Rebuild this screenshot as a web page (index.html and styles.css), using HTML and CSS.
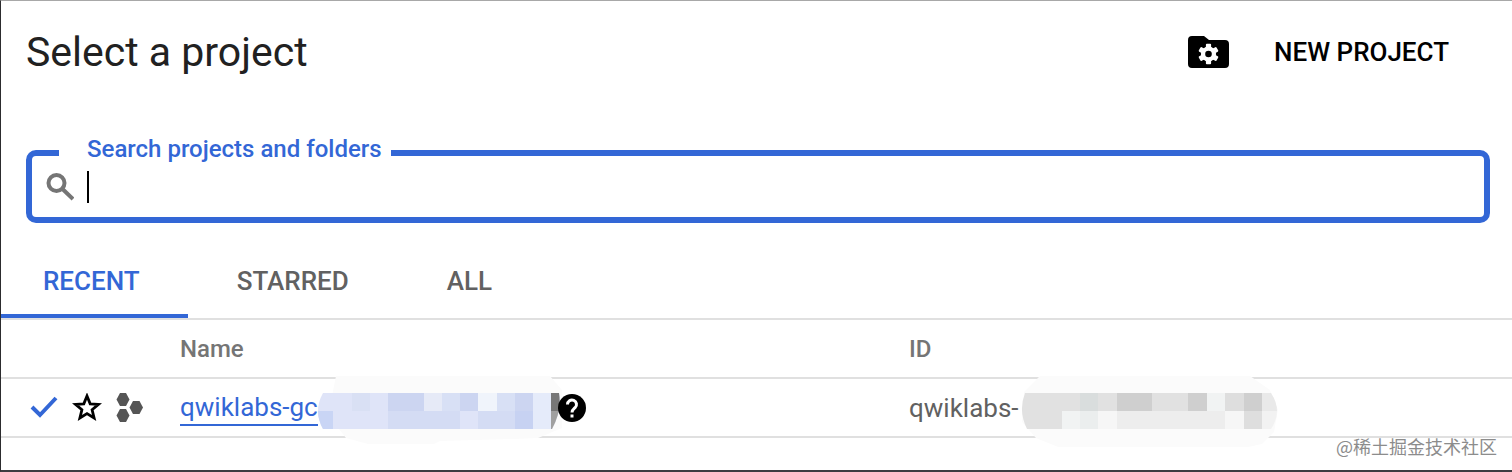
FILE: index.html
```html
<!DOCTYPE html>
<html lang="en">
<head>
    <meta charset="UTF-8">
    <meta name="viewport" content="width=device-width, initial-scale=1.0">
    <title>Select a project</title>
    <link rel="stylesheet" href="styles.css">
</head>
<body>
    <div class="dialog">
        <header class="dialog-header">
            <h1>Select a project</h1>
            <div class="header-actions">
                <button class="icon-button" aria-label="Manage resources">
                    <svg width="42" height="34" viewBox="0 0 42 34">
                        <path d="M4 1h12l5 4h16a4 4 0 0 1 4 4v20a4 4 0 0 1-4 4H4a4 4 0 0 1-4-4V5a4 4 0 0 1 4-4z"/>
                        <g fill="#fff" transform="translate(20.500 19)">
                            <circle r="7.600"/>
                            <rect x="-2.600" y="-10.200" width="5.200" height="20.400" rx="1"/>
                            <rect x="-2.600" y="-10.200" width="5.200" height="20.400" rx="1" transform="rotate(60)"/>
                            <rect x="-2.600" y="-10.200" width="5.200" height="20.400" rx="1" transform="rotate(120)"/>
                        </g>
                        <circle cx="20.500" cy="19" r="3.300"/>
                    </svg>
                </button>
                <button class="text-button">NEW PROJECT</button>
            </div>
        </header>

        <fieldset class="search">
            <legend><label for="search">Search projects and folders</label></legend>
            <div class="search-row">
                <svg width="28" height="28" viewBox="0 0 28 28" fill="none" stroke="#757575" stroke-width="4">
                    <circle cx="10.500" cy="10" r="8"/>
                    <path d="M16.500 16L27 26"/>
                </svg>
                <span class="caret"></span>
                <input type="text" id="search">
            </div>
        </fieldset>

        <nav class="tabs">
            <button class="tab active">RECENT</button>
            <button class="tab">STARRED</button>
            <button class="tab">ALL</button>
        </nav>

        <table class="projects">
            <thead>
                <tr>
                    <th class="col-icons"></th>
                    <th class="col-name">Name</th>
                    <th>ID</th>
                </tr>
            </thead>
            <tbody>
                <tr>
                    <td>
                        <div class="row-icons">
                            <svg width="28" height="30" viewBox="0 0 28 30" fill="none" stroke="#3367d6" stroke-width="4">
                                <path d="M2 14l8 8L26 5"/>
                            </svg>
                            <button class="icon-button" aria-label="Star project">
                                <svg width="30" height="30" viewBox="0 0 30 30" fill="none" stroke="#000" stroke-width="2.800">
                                    <path d="M15 3l3.200 7.800 8.300.6-6.400 5.400 2 8.200-7.100-4.400L7.900 25l2-8.200-6.400-5.400 8.300-.6z"/>
                                </svg>
                            </button>
                            <svg width="28" height="30" viewBox="0 0 28 30" fill="#555">
                                <path d="M4 0h6l3.500 6.500L10 13H4L.5 6.500z"/>
                                <path d="M17 8h6.500l3.500 6.500-3.500 6.500H17l-3.500-6.500z"/>
                                <path d="M4 16h6l3.500 6.500L10 29H4L.5 22.500z"/>
                            </svg>
                        </div>
                    </td>
                    <td>
                        <div class="cell">
                            <a href="#">qwiklabs-gc</a>
                            <span class="mask mask-name">
                                <svg width="246" height="72" viewBox="316 376 246 72">
                                    <path fill="#fbfbfb" d="M336 376h214l12 14v38l-24 10-24 1-74 2-6 3h-66l-22-6-14-18v-24z"/>
                                    <clipPath id="name-shape"><path d="M323 393h236q3 18-7 36H323q-10-18 0-36z"/></clipPath>
                                    <g clip-path="url(#name-shape)">
                                        <path fill="#dfe4f8" d="M315 393h247v36H315z"/>
                                        <path fill="#d9e0f4" d="M352 393h18v18h-18z"/>
                                        <path fill="#c9d5f5" d="M315 411h18v18h-18z"/>
                                        <path fill="#ccd5f1" d="M388 393h36v18h-36zM460 393h18v18h-18zM515 393h18v18h-18z"/>
                                        <path fill="#e6eaf7" d="M424 393h18v18h-18z"/>
                                        <path fill="#d8e0f5" d="M442 393h18v18h-18zM497 393h18v18h-18z"/>
                                        <path fill="#f0f4fb" d="M478 393h19v18h-19z"/>
                                        <path fill="#d4dcf4" d="M388 411h72v18h-72zM478 411h37v18h-37z"/>
                                        <path fill="#c7d2f2" d="M515 411h18v18h-18z"/>
                                        <path fill="#e5ebfa" d="M533 393h18v36h-18z"/>
                                        <path fill="#777" d="M551 393h11v18h-11z"/>
                                        <path fill="#a0a0a0" d="M551 411h11v18h-11z"/>
                                    </g>
                                </svg>
                            </span>
                            <button class="icon-button help" aria-label="Help">
                                <svg width="28" height="28" viewBox="0 0 28 28">
                                    <circle cx="14" cy="14" r="14"/>
                                    <path fill="none" stroke="#fff" stroke-width="3" d="M9.500 10.500a4.500 4.500 0 1 1 7.600 3.200c-1.700 1.600-3.100 2.300-3.100 4.800"/>
                                    <path fill="#fff" d="M12.500 20.500h3v3h-3z"/>
                                </svg>
                            </button>
                        </div>
                    </td>
                    <td>
                        <div class="cell">
                            <span>qwiklabs-</span>
                            <span class="mask mask-id">
                                <svg width="258" height="72" viewBox="1020 376 258 72">
                                    <path fill="#fbfbfb" d="M1040 376h210l20 14 8 20-4 22-12 12-14 3h-190l-22-9-14-16 2-30z"/>
                                    <clipPath id="id-shape"><path d="M1025 393h246q12 18 0 36H1027q-9-18-2-36z"/></clipPath>
                                    <g clip-path="url(#id-shape)">
                                        <path fill="#e1e1e1" d="M1020 393h42v36h-42zM1062 393h18v18h-18zM1098 393h19v18h-19zM1152 393h36v18h-36z"/>
                                        <path fill="#d9dddd" d="M1080 393h18v18h-18z"/>
                                        <path fill="#cfcfcf" d="M1117 393h35v18h-35zM1188 393h19v18h-19zM1244 393h18v18h-18z"/>
                                        <path fill="#f1f3f3" d="M1062 411h18v18h-18zM1207 393h18v18h-18z"/>
                                        <path fill="#ebeeee" d="M1080 411h18v18h-18z"/>
                                        <path fill="#f6f6f6" d="M1098 411h19v18h-19zM1225 411h19v18h-19z"/>
                                        <path fill="#ededed" d="M1117 411h108v18h-108z"/>
                                        <path fill="#dedede" d="M1225 393h19v18h-19zM1244 411h18v18h-18z"/>
                                        <path fill="#e9e9e9" d="M1262 393h16v18h-16z"/>
                                        <path fill="#f2f2f2" d="M1262 411h16v18h-16z"/>
                                    </g>
                                </svg>
                            </span>
                        </div>
                    </td>
                </tr>
            </tbody>
        </table>
        <div class="watermark" lang="zh">@稀土掘金技术社区</div>
    </div>
</body>
</html>
```
FILE: styles.css
```css
* {
    margin: 0;
    padding: 0;
    box-sizing: border-box;
}

body {
    background: #fff;
    color: #212121;
    font-family: Roboto, "Liberation Sans", sans-serif;
}

button {
    background: none;
    border: none;
    font-family: inherit;
    cursor: pointer;
}

svg {
    display: block;
}

.dialog {
    position: relative;
    min-height: 100vh;
    border-top: 1px solid #a8a8a8;
    border-left: 1px solid #2c2c2e;
    border-bottom: 2px solid #3c3c40;
}

.dialog-header {
    display: flex;
    align-items: center;
    justify-content: space-between;
    height: 102px;
    padding: 0 63px 0 25px;
}

.dialog-header h1 {
    font-size: 41px;
    font-weight: 400;
}

.header-actions {
    display: flex;
    align-items: center;
    gap: 44px;
}

.text-button {
    color: #000;
    font-size: 26px;
    font-weight: 500;
}

.search {
    height: 88px;
    margin: 32px 22px 0 25px;
    border: 6px solid #3367d6;
    border-radius: 10px;
}

.search legend {
    margin-left: 27px;
    padding: 0 9px 8px 28px;
    color: #3367d6;
    font-size: 24px;
    font-weight: 500;
    line-height: 28px;
}

.search-row {
    display: flex;
    align-items: center;
    height: 32px;
    padding: 0 14px;
}

.search-row input {
    flex: 1;
    border: none;
    outline: none;
    font-size: 26px;
    font-family: inherit;
}

.caret {
    width: 2px;
    height: 32px;
    margin-left: 13px;
    background: #000;
}

.tabs {
    display: flex;
    height: 97px;
    border-bottom: 2px solid #e0e0e0;
}

.tab {
    padding: 25px 49px 0;
    border-bottom: 4px solid transparent;
    color: #616161;
    font-size: 26px;
    font-weight: 500;
}

.tab:first-child {
    padding: 25px 48px 0 42px;
}

.tab.active {
    color: #3367d6;
    border-bottom-color: #3367d6;
}

.projects {
    width: 100%;
    table-layout: fixed;
    border-collapse: separate;
    border-spacing: 0;
    color: #616161;
}

.projects th,
.projects td {
    height: 59px;
    border-bottom: 2px solid #e0e0e0;
    text-align: left;
}

.projects th {
    color: #757575;
    font-size: 24px;
    font-weight: 500;
}

.projects td {
    font-size: 26px;
}

.col-icons {
    width: 179px;
}

.col-name {
    width: 729px;
}

.row-icons {
    display: flex;
    align-items: center;
    gap: 14px;
    padding-left: 29px;
}

.cell {
    display: flex;
    align-items: center;
}

.cell a {
    border-bottom: 2px solid #3367d6;
    color: #3367d6;
    line-height: 34px;
    text-decoration: none;
}

/* blurred-out part of a name, drawn over the row lines */
.mask {
    position: relative;
    height: 36px;
}

.mask svg {
    position: absolute;
    top: -14px;
    right: -4px;
}

.mask-name {
    width: 240px;
}

.mask-id {
    width: 256px;
}

.help {
    position: relative;
    z-index: 1;
}

.watermark {
    position: absolute;
    right: 15px;
    bottom: 11px;
    color: #8c8c8c;
    font-family: "Noto Sans CJK SC", sans-serif;
    font-size: 18px;
    line-height: 26px;
}
```
